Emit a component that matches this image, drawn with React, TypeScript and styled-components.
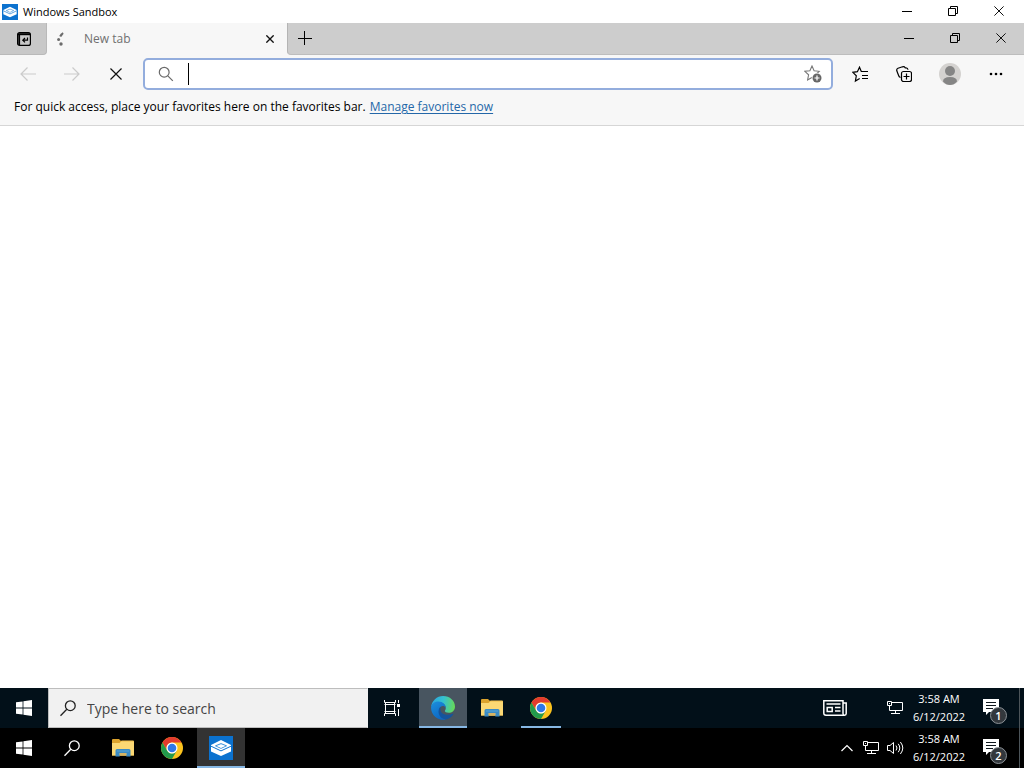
import React from "react";
import styled, { createGlobalStyle } from "styled-components";

const GlobalStyle = createGlobalStyle`
  * { box-sizing: border-box; }
  html, body, #root { height: 100%; }
  body {
    margin: 0;
    background: #fff;
    color: #000;
    font-family: "Open Sans", "Noto Sans", sans-serif;
    font-size: 12px;
  }
  button, input { font: inherit; color: inherit; }
  svg { display: block; }
`;

const Screen = styled.div`
  display: flex;
  flex-direction: column;
  min-height: 100vh;
`;

const PlainButton = styled.button`
  display: flex;
  flex: none;
  align-items: center;
  justify-content: center;
  margin: 0;
  padding: 0;
  border: 0;
  background: transparent;
`;

const TitleBar = styled.header`
  display: flex;
  align-items: center;
  height: 23px;
  padding: 0 2px;
  gap: 5px;
`;

const Title = styled.h1`
  flex: 1;
  margin: 0;
  font-size: 11px;
  line-height: 23px;
  font-weight: 400;
`;

const CaptionGroup = styled.div`
  display: flex;
  align-self: stretch;
`;

const CaptionButton = styled(PlainButton)`
  width: 46px;
  padding-bottom: 2px;
`;

const TabStrip = styled.div`
  display: flex;
  height: 32px;
  background: #cdcdcd;
`;

const TabActions = styled(PlainButton)`
  width: 47px;
  padding-left: 2px;
  border-right: 1px solid #b9b9b9;
  border-bottom: 1px solid #b9b9b9;
  border-bottom-right-radius: 4px;
  background: #c8c8c8;
`;

const TabActionsWrap = styled.div`
  display: flex;
  background: #f7f7f7;
`;

const Tab = styled.div`
  display: flex;
  align-items: center;
  width: 240px;
  padding: 0 6px 0 8px;
  background: #f7f7f7;
  color: #707070;
`;

const TabName = styled.span`
  flex: 1;
  padding-left: 17px;
  font-size: 12px;
  line-height: 32px;
`;

const TabClose = styled(PlainButton)`
  width: 22px;
  height: 22px;
`;

const StripRest = styled.div`
  display: flex;
  flex: 1;
  justify-content: space-between;
  border-left: 1px solid #b4b4b4;
  border-bottom: 1px solid #bdbdbd;
  border-bottom-left-radius: 4px;
  background: #cdcdcd;
`;

const StripBacking = styled.div`
  display: flex;
  flex: 1;
  background: #f7f7f7;
`;

const NewTabButton = styled(PlainButton)`
  width: 34px;
  padding-bottom: 1px;
`;

const Toolbar = styled.div`
  display: flex;
  align-items: center;
  height: 38px;
  padding: 0 6px;
  background: #f7f7f7;
`;

const ToolButton = styled(PlainButton)<{ $width?: number }>`
  width: ${(p) => p.$width ?? 44}px;
  height: 32px;
`;

const AddressBar = styled.div`
  display: flex;
  flex: 1;
  align-items: center;
  height: 32px;
  margin: 0 5px;
  padding: 0 9px 0 13px;
  border: 2px solid #93addd;
  border-radius: 5px;
  background: #fff;
`;

const Caret = styled.span`
  width: 1px;
  height: 22px;
  margin-left: 14px;
  background: #000;
`;

const AddressInput = styled.input`
  flex: 1;
  min-width: 0;
  padding: 0;
  border: 0;
  outline: 0;
  background: transparent;
  font-size: 14px;
`;

const FavoritesBar = styled.div`
  display: flex;
  gap: 4px;
  height: 33px;
  padding: 0 14px;
  border-bottom: 1px solid #d6d6d6;
  background: #f7f7f7;
  font-size: 12px;
  line-height: 28px;
`;

const FavoritesLink = styled.a`
  color: #2467a8;
  text-decoration: underline;
  text-underline-offset: 2px;
`;

const PageArea = styled.main`
  flex: 1;
  background: #fff;
`;

const Taskbar = styled.footer<{ $color: string }>`
  display: flex;
  height: 40px;
  background: ${(p) => p.$color};
  color: #fff;
`;

const TaskButton = styled(PlainButton)`
  width: 48px;
`;

const SearchBox = styled.label`
  display: flex;
  align-items: center;
  width: 320px;
  padding-left: 11px;
  gap: 11px;
  border: 1px solid #bdbdbd;
  border-right-color: #f1f1f1;
  background: #f1f1f1;
  color: #000;
`;

const SearchInput = styled.input`
  flex: 1;
  min-width: 0;
  padding: 0;
  border: 0;
  outline: 0;
  background: transparent;
  font-size: 14px;
  &::placeholder { color: #444; opacity: 1; }
`;

const AppRow = styled.nav`
  display: flex;
  gap: 1px;
  flex: 1;
  padding-left: 3px;
`;

const AppButton = styled(PlainButton)<{ $active?: string; $running?: boolean }>`
  position: relative;
  width: 48px;
  background: ${(p) => p.$active ?? "transparent"};
  &::after {
    content: "";
    position: absolute;
    bottom: 0;
    left: ${(p) => (p.$active ? 0 : 4)}px;
    right: ${(p) => (p.$active ? 0 : 4)}px;
    height: 2px;
    background: ${(p) => (p.$active || p.$running ? "#86b7e4" : "transparent")};
  }
`;

const Tray = styled.div`
  display: flex;
`;

const NewsButton = styled(PlainButton)`
  width: 40px;
  margin-right: 28px;
`;

const TrayButton = styled(PlainButton)`
  width: 24px;
`;

const Clock = styled.time`
  display: flex;
  flex-direction: column;
  align-items: center;
  width: 64px;
  padding-top: 2px;
  font-size: 11px;
  line-height: 18px;
  white-space: nowrap;
`;

const NotifyButton = styled(PlainButton)`
  position: relative;
  width: 48px;
  padding: 0 8px 2px 0;
`;

const Badge = styled.span`
  position: absolute;
  right: 12px;
  bottom: 4px;
  width: 17px;
  height: 17px;
  border: 1px solid #8c9297;
  border-radius: 50%;
  background: #33383d;
  font-size: 11px;
  font-weight: 600;
  line-height: 15px;
  text-align: center;
`;

const ShowDesktop = styled(PlainButton)`
  width: 5px;
  border-left: 1px solid #4c5459;
`;

const MinimizeIcon = () => (
  <svg width="10" height="10" viewBox="0 0 10 10"><path d="M0 5.5h10" stroke="#000" /></svg>
);
const RestoreIcon = () => (
  <svg width="10" height="10" viewBox="0 0 10 10" fill="none" stroke="#000">
    <path d="M.5 2.5h7v7h-7zM2.5 2.5v-2h7v7h-2" />
  </svg>
);
const CrossIcon = ({ size = 10, weight = 1 }: { size?: number; weight?: number }) => (
  <svg width={size} height={size} viewBox="0 0 10 10">
    <path d="M.4.4l9.2 9.2M9.6.4L.4 9.6" stroke="#111" strokeWidth={weight} />
  </svg>
);

const SandboxIcon = ({ size }: { size: number }) => (
  <svg width={size} height={size} viewBox="0 0 24 24">
    <path d="M0 0h24v24H0z" fill="#0b72cf" />
    <path d="M12 4l10 5v6.500L12 20 2 15.500V9z" fill="#fff" />
    <path d="M2 10.200l10 4.700 10-4.700" fill="none" stroke="#0b72cf" strokeWidth="1" />
    <path d="M6.500 9.800L12 7.600l5.500 2.200-5.500 2.600z" fill="#d3e9fa" stroke="#2b86d6" strokeWidth=".9" />
    <path d="M8 10q2.200-.2 3.500-1.200 1.200-.5 4.500 1.200l-4 1.800z" fill="#fff" />
  </svg>
);

const WindowsIcon = () => (
  <svg width="16" height="16" viewBox="0 0 16 16" fill="#fff">
    <path d="M0 2.300l6.600-.9v6.200H0zM7.400 1.300L16 0v7.600H7.400zM0 8.400h6.600v6.200L0 13.700zM7.400 8.400H16V16l-8.600-1.200z" />
  </svg>
);

const LensIcon = ({ color }: { color: string }) => (
  <svg width="16" height="17" viewBox="0 0 16 17" fill="none" stroke={color} strokeWidth="1.300">
    <circle cx="10.300" cy="5.700" r="4.900" /><path d="M6.800 9.200L.5 15.700" />
  </svg>
);

const FolderIcon = () => (
  <svg width="22" height="18" viewBox="0 0 22 18">
    <path d="M0 1q0-1 1-1h6l2 2h12q1 0 1 1v13.500H0z" fill="#dca32d" />
    <path d="M9.500 1.500H21q1 0 1 1V5H7z" fill="#f3c555" />
    <path d="M0 4h7.500l2-1.200H22v13.700H0z" fill="#fbd874" />
    <path d="M3.500 17.500V11.500q0-1.500 1.500-1.500h12q1.500 0 1.500 1.500v6h-4.200V14H7.700v3.500z" fill="#3b8bc4" />
    <path d="M7.700 14h6.600v2.500H7.700z" fill="#d5b364" />
    <path d="M5 11.500h12v1H5z" fill="#58a4d4" />
  </svg>
);

const ChromeIcon = () => (
  <svg width="22" height="22" viewBox="0 0 24 24">
    <circle cx="12" cy="12" r="12" fill="#fcc31e" />
    <path d="M1.610 6A12 12 0 0 1 22.390 6H12A6 6 0 0 0 6.800 15z" fill="#e33b2e" />
    <path d="M1.610 6A12 12 0 0 0 12 24l5.200-9A6 6 0 0 1 6.800 15z" fill="#229b4c" />
    <circle cx="12" cy="12" r="6" fill="#fff" />
    <circle cx="12" cy="12" r="4.700" fill="#3078e8" />
  </svg>
);

const EdgeIcon = () => (
  <svg width="24" height="24" viewBox="0 0 24 24">
    <defs>
      <linearGradient id="edgeTop" x1="0" y1=".4" x2="1" y2=".5">
        <stop offset="0" stopColor="#2aa5df" /><stop offset=".5" stopColor="#35c1cf" /><stop offset="1" stopColor="#67d957" />
      </linearGradient>
      <linearGradient id="edgeBody" x1="0" y1="0" x2=".5" y2="1">
        <stop offset="0" stopColor="#1c8fdc" /><stop offset="1" stopColor="#0d68c4" />
      </linearGradient>
    </defs>
    <path d="M.1 11A12 12 0 0 1 12 0c7 0 12 5 12 10.400 0 4-3 6.400-6.300 6.400-2.600 0-3.900-.9-3.900-1.700 0-.6 1-1.100 1-3.100C14.800 8 10 5.500 6.500 6 3.500 6.400 1 8.500.1 11z" fill="url(#edgeTop)" />
    <path d="M.1 11C.8 7.500 4 5.600 7.400 5.600c4.600 0 7.400 3.100 7.400 6.400-1-2.300-3.600-2.500-5-1.300-2.500 2.100-1.800 6.500.2 8.800 1.600 2 3.600 3.500 5 4A12 12 0 0 1 .1 11z" fill="url(#edgeBody)" />
    <path d="M9.800 10.700C6 12.800 6.500 22.400 15 23.600c3.300-.9 5.800-2.700 7.400-5.500.2-.5-.2-.6-.6-.4-5.800 2.800-14.500.3-12-7z" fill="#15549c" />
  </svg>
);

const TaskViewIcon = () => (
  <svg width="16" height="16" viewBox="0 0 16 16" fill="none" stroke="#fff">
    <path d="M.5 0v2.500h11V0M.5 16v-2.500h11V16M.5 4.500h11M.5 11.500h11M1.500 2.500v11M10.500 2.500v11M14.500 0v3M14.500 9v7" />
    <path d="M13 4h3v3h-3z" fill="#fff" stroke="none" />
  </svg>
);

const NetworkIcon = () => (
  <svg width="16" height="14" viewBox="0 0 16 14" fill="none" stroke="#fff">
    <path d="M4.500 1.500h11v8h-13v-5M8.500 9.500v3M4 12.500h9M.5.500h4v4h-4zM2 2.500h1" />
  </svg>
);

const SoundIcon = () => (
  <svg width="17" height="14" viewBox="0 0 17 14" fill="none" stroke="#fff">
    <path d="M.5 4.500h2.500L6.500 1.500v11L3 9.500H.5zM9 4.500q2 2.500 0 5M11.200 2.800q3.200 4.200 0 8.400M13.400 1q4.800 6 0 12" />
  </svg>
);

const NewsIcon = () => (
  <svg width="24" height="16" viewBox="0 0 24 16" fill="none" stroke="#fff" strokeWidth="1.500">
    <path d="M21.500 15.200H3Q.8 15.200.8 13V.8H20v12.700q0 1.700 1.600 1.700t1.600-1.700V3H20" />
    <path d="M3.500 4h14M12 7.500h5.500M12 11h5.500M4.200 7.500h5v4h-5z" />
  </svg>
);

const NoteIcon = () => (
  <svg width="16" height="16" viewBox="0 0 16 16">
    <path d="M0 0h16v13H6l-3 3v-3H0z" fill="#fff" />
    <path d="M3 3.500h10M3 6.500h10M3 9.500h7" stroke="#10181e" />
  </svg>
);

const starPath = "M8 1l2.100 4.700 5.100.6-3.800 3.500 1 5.100L8 12.400l-4.400 2.500 1-5.100L.8 6.300l5.100-.6z";

const TrayEnd = ({ count }: { count: number }) => (
  <>
    <Clock dateTime="2022-06-12T03:58"><span>3:58 AM</span><span>6/12/2022</span></Clock>
    <NotifyButton aria-label="Notifications"><NoteIcon /><Badge>{count}</Badge></NotifyButton>
    <ShowDesktop aria-label="Show desktop" />
  </>
);

const WindowControls = () => (
  <CaptionGroup>
    <CaptionButton aria-label="Minimize"><MinimizeIcon /></CaptionButton>
    <CaptionButton aria-label="Restore"><RestoreIcon /></CaptionButton>
    <CaptionButton aria-label="Close"><CrossIcon /></CaptionButton>
  </CaptionGroup>
);

export default function App() {
  return (
    <Screen>
      <GlobalStyle />
      <TitleBar>
        <SandboxIcon size={16} />
        <Title>Windows Sandbox</Title>
        <WindowControls />
      </TitleBar>

      <TabStrip>
        <TabActionsWrap>
          <TabActions aria-label="Tab actions">
            <svg width="14" height="14" viewBox="0 0 14 14" fill="none" stroke="#000" strokeWidth="1.200">
              <rect x=".6" y=".6" width="12.800" height="12.800" rx="2" />
              <path d="M1 2.200h12" strokeWidth="2" /><path d="M2.200 3v10" strokeWidth="1.800" />
              <path d="M10.500 5.500v2.700H6M8 6L5.800 8.200 8 10.400" />
            </svg>
          </TabActions>
        </TabActionsWrap>
        <Tab>
          <svg width="12" height="16" viewBox="0 0 12 16" fill="#6c6c6c">
            <path d="M7.800 1.300l.8 1.400-2.400 3.200L4.200 5Q5.500 2.500 7.800 1.300z" />
            <circle cx="3.600" cy="8.600" r="1.500" /><circle cx="6" cy="13" r="1.700" />
          </svg>
          <TabName>New tab</TabName>
          <TabClose aria-label="Close tab"><CrossIcon size={8} weight={1.700} /></TabClose>
        </Tab>
        <StripBacking>
          <StripRest>
            <NewTabButton aria-label="New tab">
              <svg width="14" height="14" viewBox="0 0 14 14"><path d="M0 7.500h14M6.500 0v14" stroke="#000" /></svg>
            </NewTabButton>
            <WindowControls />
          </StripRest>
        </StripBacking>
      </TabStrip>

      <Toolbar>
        <ToolButton aria-label="Back">
          <svg width="16" height="14" viewBox="0 0 16 14" fill="none" stroke="#cbcbcb" strokeWidth="1.200"><path d="M16 7H1M7.500.5L1 7l6.500 6.500" /></svg>
        </ToolButton>
        <ToolButton aria-label="Forward">
          <svg width="16" height="14" viewBox="0 0 16 14" fill="none" stroke="#cbcbcb" strokeWidth="1.200"><path d="M0 7h15M8.500.5L15 7l-6.500 6.500" /></svg>
        </ToolButton>
        <ToolButton aria-label="Stop"><CrossIcon size={12} /></ToolButton>
        <AddressBar>
          <svg width="16" height="16" viewBox="0 0 16 16" fill="none" stroke="#6a6a6a" strokeWidth="1.200">
            <circle cx="6.200" cy="6.200" r="4.900" /><path d="M9.800 9.800l5 5" />
          </svg>
          <Caret />
          <AddressInput aria-label="Address" />
          <PlainButton aria-label="Add to favorites">
            <svg width="18" height="18" viewBox="0 0 18 18">
              <path d={starPath} fill="none" stroke="#777" strokeWidth="1.100" />
              <circle cx="13" cy="13" r="5.300" fill="#fff" /><circle cx="13" cy="13" r="4.500" fill="#666" />
              <path d="M10.500 13h5M13 10.500v5" stroke="#fff" strokeWidth="1.200" />
            </svg>
          </PlainButton>
        </AddressBar>
        <ToolButton aria-label="Favorites">
          <svg width="16" height="17" viewBox="0 0 16 17" fill="none" stroke="#000" strokeWidth="1.200">
            <path d="M9.300 5.500L7.500 1.200 5.400 5.700.8 6.300l3.500 3.500-.9 5.300 4.300-2.500M9 5.500h7M10 9.500h6M10 12.500h6" />
          </svg>
        </ToolButton>
        <ToolButton aria-label="Collections">
          <svg width="16" height="16" viewBox="0 0 16 16" fill="none" stroke="#000" strokeWidth="1.200">
            <path d="M4.500 11.500Q3 11 2.600 9.500L.8 4.800Q.3 3 2 2.200L6.500.8q1.800-.5 2.700 1h.8q1.800 0 2 2" />
            <rect x="5.500" y="5.500" width="10" height="10" rx="2" /><path d="M10.500 7.500v6M7.500 10.500h6" />
          </svg>
        </ToolButton>
        <ToolButton $width={48} aria-label="Profile">
          <svg width="22" height="22" viewBox="0 0 22 22">
            <circle cx="11" cy="11" r="11" fill="#d4d2d0" /><circle cx="11" cy="8" r="5" fill="#858585" />
            <path d="M4 18.500q0-4.500 7-4.500t7 4.500Q15 22 11 22t-7-3.500z" fill="#858585" />
          </svg>
        </ToolButton>
        <ToolButton aria-label="Settings and more">
          <svg width="14" height="4" viewBox="0 0 14 4"><circle cx="2" cy="2" r="1.300" /><circle cx="7" cy="2" r="1.300" /><circle cx="12" cy="2" r="1.300" /></svg>
        </ToolButton>
      </Toolbar>

      <FavoritesBar>
        <span>For quick access, place your favorites here on the favorites bar.</span>
        <FavoritesLink href="#favorites">Manage favorites now</FavoritesLink>
      </FavoritesBar>

      <PageArea />

      <Taskbar $color="#021019">
        <TaskButton aria-label="Start"><WindowsIcon /></TaskButton>
        <SearchBox>
          <LensIcon color="#222" />
          <SearchInput aria-label="Search" placeholder="Type here to search" />
        </SearchBox>
        <TaskButton aria-label="Task view"><TaskViewIcon /></TaskButton>
        <AppRow>
          <AppButton $active="#485560" aria-label="Microsoft Edge"><EdgeIcon /></AppButton>
          <AppButton aria-label="File Explorer"><FolderIcon /></AppButton>
          <AppButton $running aria-label="Google Chrome"><ChromeIcon /></AppButton>
        </AppRow>
        <Tray>
          <NewsButton aria-label="News"><NewsIcon /></NewsButton>
          <TrayButton aria-label="Network"><NetworkIcon /></TrayButton>
          <TrayEnd count={1} />
        </Tray>
      </Taskbar>

      <Taskbar $color="#000">
        <TaskButton aria-label="Start"><WindowsIcon /></TaskButton>
        <TaskButton aria-label="Search"><LensIcon color="#fff" /></TaskButton>
        <AppRow>
          <AppButton aria-label="File Explorer"><FolderIcon /></AppButton>
          <AppButton aria-label="Google Chrome"><ChromeIcon /></AppButton>
          <AppButton $active="#333" aria-label="Windows Sandbox"><SandboxIcon size={24} /></AppButton>
        </AppRow>
        <Tray>
          <TrayButton aria-label="Show hidden icons">
            <svg width="12" height="8" viewBox="0 0 12 8"><path d="M.5 7L6 1.500 11.500 7" fill="none" stroke="#fff" strokeWidth="1.200" /></svg>
          </TrayButton>
          <TrayButton aria-label="Network"><NetworkIcon /></TrayButton>
          <TrayButton aria-label="Volume"><SoundIcon /></TrayButton>
          <TrayEnd count={2} />
        </Tray>
      </Taskbar>
    </Screen>
  );
}
